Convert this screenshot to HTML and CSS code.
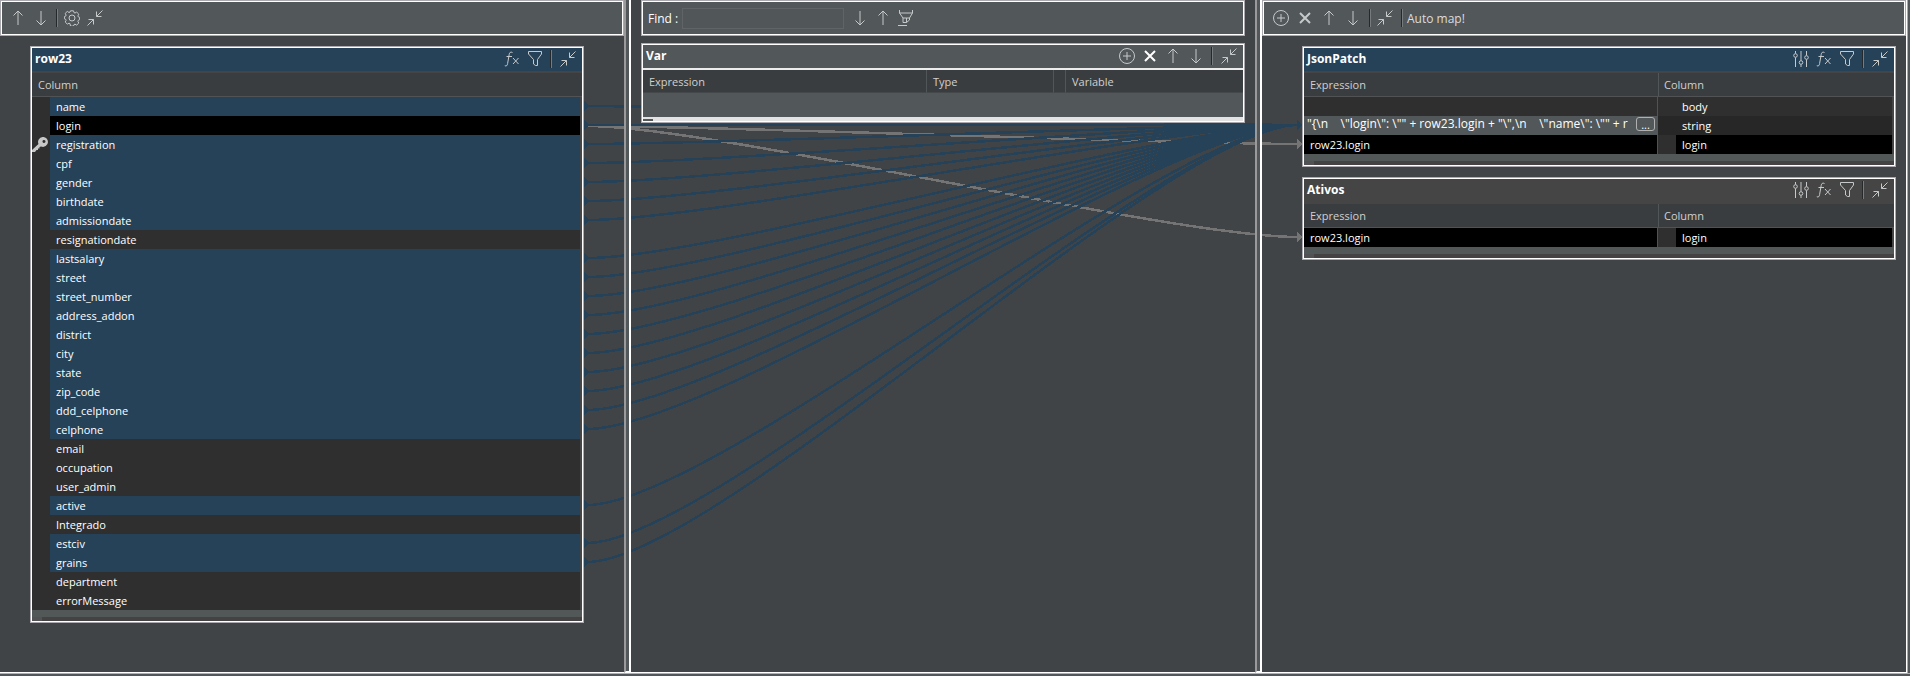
FILE: index.html
```html
<!DOCTYPE html>
<html lang="en">
<head>
<meta charset="utf-8">
<title>Map editor</title>
<link rel="stylesheet" href="styles.css">
</head>
<body>
<svg class="symbols" aria-hidden="true">
  <symbol id="up" viewBox="0 0 16 16"><path d="M8 15V1M3.500 5.500L8 1L12.500 5.500"/></symbol>
  <symbol id="down" viewBox="0 0 16 16"><path d="M8 1V15M3.500 10.500L8 15L12.500 10.500"/></symbol>
  <symbol id="gear" viewBox="0 0 16 16"><circle cx="8" cy="8" r="3"/><path d="M6.500 .8h3l.5 1.800 1 .4 1.700-.9 2.100 2.100-.9 1.700.4 1 1.300.4v2.400l-1.300.6-.4 1 .9 1.700-2.100 2.100-1.700-.9-1 .4-.5 1.500h-3L6 13.600l-1-.4-1.700.9L1.200 12l.9-1.700-.4-1L.4 8.800V6.600l1.300-.5.4-1L1.200 3.400l2.100-2L5 2.500l1-.4z"/></symbol>
  <symbol id="shrink" viewBox="0 0 16 16"><path d="M15.500.5L9.500 6.500M9.500 1.500V6.500H14.500M.5 15.500L6.500 9.500M1.500 9.500H6.500V14.500"/></symbol>
  <symbol id="plus" viewBox="0 0 16 16"><circle cx="8" cy="8" r="7.500"/><path d="M8 4V12M4 8H12"/></symbol>
  <symbol id="cross" viewBox="0 0 16 16"><path class="heavy" d="M3 3L13 13M13 3L3 13"/></symbol>
  <symbol id="fx" viewBox="0 0 16 16"><path d="M8.500 1.500C6.500.5 5.500 1.500 5.200 3.500L3.600 12.500C3.300 14.500 2.500 15.500 .8 14.700M2.500 5.500H8M9 7L14.500 13M14.500 7L9 13"/></symbol>
  <symbol id="funnel" viewBox="0 0 16 16"><path d="M1.500 .5H14.500V3L10.500 8.500V14.500H8.500L6.500 13V8.500L1.500 3Z"/></symbol>
  <symbol id="sliders" viewBox="0 0 16 16"><path d="M2.500 0V2.500M2.500 6.500V16M8 0V9.500M8 13.500V16M13.500 0V4.500M13.500 8.500V16"/><circle cx="2.500" cy="4.500" r="1.800"/><circle cx="8" cy="11.500" r="1.800"/><circle cx="13.500" cy="6.500" r="1.800"/></symbol>
  <symbol id="marker" viewBox="0 0 16 16"><path d="M1.500 0V3L5 8V12.500H8.500L11.500 10V8L14.500 3V0M1.500 3H14.500M5 8H11.500M8.500 8V12.500M0 15.500H9"/></symbol>
  <symbol id="key" viewBox="0 0 16 16"><path class="solid" fill-rule="evenodd" d="M10.500 0A5 5 0 0 1 16 5A5 5 0 0 1 9 9.500L7.500 10V11.500H6V13H4.500L3 15H0V13L6.500 7A5 5 0 0 1 10.500 0ZM11.500 3A1.500 1.500 0 1 0 13.500 4.500A1.500 1.500 0 0 0 11.500 3Z"/></symbol>
</svg>

<main class="mapper" id="mapper">
  <svg class="links" id="links" aria-hidden="true"></svg>

  <section class="pane">
    <div class="toolbar framed">
      <button class="tool" aria-label="Move up"><svg><use href="#up"/></svg></button>
      <button class="tool" aria-label="Move down"><svg><use href="#down"/></svg></button>
      <span class="rule"></span>
      <button class="tool" aria-label="Settings"><svg><use href="#gear"/></svg></button>
      <button class="tool" aria-label="Minimize all"><svg><use href="#shrink"/></svg></button>
    </div>
    <div class="stack stack-in">
      <article class="box framed">
        <header class="title active">
          <h2>row23</h2>
          <button class="tool" aria-label="Expression filter"><svg><use href="#fx"/></svg></button>
          <button class="tool" aria-label="Filter"><svg><use href="#funnel"/></svg></button>
          <span class="rule"></span>
          <button class="tool last" aria-label="Minimize"><svg><use href="#shrink"/></svg></button>
        </header>
        <table class="grid">
          <colgroup><col class="gutter"><col></colgroup>
          <thead><tr><th colspan="2">Column</th></tr></thead>
          <tbody id="source">
            <tr class="used"><td></td><td>name</td></tr>
            <tr class="picked"><td></td><td>login</td></tr>
            <tr class="used"><td><svg class="key"><use href="#key"/></svg></td><td>registration</td></tr>
            <tr class="used"><td></td><td>cpf</td></tr>
            <tr class="used"><td></td><td>gender</td></tr>
            <tr class="used"><td></td><td>birthdate</td></tr>
            <tr class="used"><td></td><td>admissiondate</td></tr>
            <tr><td></td><td>resignationdate</td></tr>
            <tr class="used"><td></td><td>lastsalary</td></tr>
            <tr class="used"><td></td><td>street</td></tr>
            <tr class="used"><td></td><td>street_number</td></tr>
            <tr class="used"><td></td><td>address_addon</td></tr>
            <tr class="used"><td></td><td>district</td></tr>
            <tr class="used"><td></td><td>city</td></tr>
            <tr class="used"><td></td><td>state</td></tr>
            <tr class="used"><td></td><td>zip_code</td></tr>
            <tr class="used"><td></td><td>ddd_celphone</td></tr>
            <tr class="used"><td></td><td>celphone</td></tr>
            <tr><td></td><td>email</td></tr>
            <tr><td></td><td>occupation</td></tr>
            <tr><td></td><td>user_admin</td></tr>
            <tr class="used"><td></td><td>active</td></tr>
            <tr><td></td><td>Integrado</td></tr>
            <tr class="used"><td></td><td>estciv</td></tr>
            <tr class="used"><td></td><td>grains</td></tr>
            <tr><td></td><td>department</td></tr>
            <tr><td></td><td>errorMessage</td></tr>
          </tbody>
        </table>
        <div class="tail"></div>
      </article>
    </div>
  </section>

  <div class="sash"></div>

  <section class="pane pane-var">
    <div class="toolbar framed find">
      <label for="find">Find :</label>
      <input id="find" type="text">
      <button class="tool" aria-label="Next match"><svg><use href="#down"/></svg></button>
      <button class="tool" aria-label="Previous match"><svg><use href="#up"/></svg></button>
      <button class="tool" aria-label="Highlight"><svg><use href="#marker"/></svg></button>
    </div>
    <article class="box framed var">
      <header class="title">
        <h2>Var</h2>
        <button class="tool" aria-label="Add variable"><svg><use href="#plus"/></svg></button>
        <button class="tool bright" aria-label="Remove variable"><svg><use href="#cross"/></svg></button>
        <button class="tool" aria-label="Move up"><svg><use href="#up"/></svg></button>
        <button class="tool" aria-label="Move down"><svg><use href="#down"/></svg></button>
        <span class="rule"></span>
        <button class="tool last" aria-label="Minimize"><svg><use href="#shrink"/></svg></button>
      </header>
      <table class="grid">
        <colgroup><col><col class="w-type"><col class="w-null"><col class="w-var"></colgroup>
        <thead><tr><th>Expression</th><th>Type</th><th></th><th>Variable</th></tr></thead>
      </table>
      <div class="void"></div>
      <div class="scroll"></div>
    </article>
  </section>

  <div class="sash"></div>

  <section class="pane">
    <div class="toolbar framed out">
      <button class="tool" aria-label="Add output"><svg><use href="#plus"/></svg></button>
      <button class="tool" aria-label="Remove output"><svg><use href="#cross"/></svg></button>
      <button class="tool" aria-label="Move up"><svg><use href="#up"/></svg></button>
      <button class="tool" aria-label="Move down"><svg><use href="#down"/></svg></button>
      <span class="rule"></span>
      <button class="tool" aria-label="Minimize all"><svg><use href="#shrink"/></svg></button>
      <span class="rule"></span>
      <button class="textual">Auto map!</button>
    </div>
    <div class="stack stack-out">
      <article class="box framed">
        <header class="title active">
          <h2>JsonPatch</h2>
          <button class="tool" aria-label="Options"><svg><use href="#sliders"/></svg></button>
          <button class="tool" aria-label="Expression filter"><svg><use href="#fx"/></svg></button>
          <button class="tool" aria-label="Filter"><svg><use href="#funnel"/></svg></button>
          <span class="rule"></span>
          <button class="tool last" aria-label="Minimize"><svg><use href="#shrink"/></svg></button>
        </header>
        <table class="grid target">
          <colgroup><col class="w-target"><col class="gutter"><col></colgroup>
          <thead><tr><th>Expression</th><th colspan="2">Column</th></tr></thead>
          <tbody>
            <tr><td></td><td></td><td>body</td></tr>
            <tr class="editing" id="json-string"><td><div class="editor"><input type="text" aria-label="Expression" value="&quot;{\n    \&quot;login\&quot;: \&quot;&quot; + row23.login + &quot;\&quot;,\n    \&quot;name\&quot;: \&quot;&quot; + r"><button aria-label="Open expression editor">...</button></div></td><td></td><td>string</td></tr>
            <tr class="picked" id="json-login"><td>row23.login</td><td></td><td>login</td></tr>
          </tbody>
        </table>
        <div class="tail"></div>
      </article>
      <article class="box framed">
        <header class="title">
          <h2>Ativos</h2>
          <button class="tool" aria-label="Options"><svg><use href="#sliders"/></svg></button>
          <button class="tool" aria-label="Expression filter"><svg><use href="#fx"/></svg></button>
          <button class="tool" aria-label="Filter"><svg><use href="#funnel"/></svg></button>
          <span class="rule"></span>
          <button class="tool last" aria-label="Minimize"><svg><use href="#shrink"/></svg></button>
        </header>
        <table class="grid target">
          <colgroup><col class="w-target"><col class="gutter"><col></colgroup>
          <thead><tr><th>Expression</th><th colspan="2">Column</th></tr></thead>
          <tbody>
            <tr class="picked" id="ativos-login"><td>row23.login</td><td></td><td>login</td></tr>
          </tbody>
        </table>
        <div class="tail"></div>
      </article>
    </div>
  </section>
  <div class="edge"></div>
</main>
<script src="links.js"></script>
</body>
</html>
```

FILE: styles.css
```css
* { box-sizing: border-box; }

body {
  margin: 0;
  min-height: 100vh;
  display: flex;
  flex-direction: column;
  background: #525759;
  color: #fff;
  font: 11px/19px "Open Sans", "Noto Sans", sans-serif;
  overflow: hidden;
}

button, input { font: inherit; color: inherit; }

.symbols { position: absolute; width: 0; height: 0; }

.mapper {
  position: relative;
  flex: 1;
  display: grid;
  grid-template-columns: 624fr 7px 624fr 7px 644fr 4px;
  margin-bottom: 2px;
  border-bottom: 1px solid #b0b0b4;
  box-shadow: inset 0 -1px #fff;
  background: #414446;
}

.links { position: absolute; inset: 0; width: 100%; height: 100%; }
.links path { fill: none; stroke-width: 2.5; shape-rendering: crispEdges; }
.links .soft { stroke: #747474; }
.links .strong { stroke: #264259; }
.links path.end { stroke: none; }
.links path.soft-end { fill: #747474; }
.links path.strong-end { fill: #264259; }

.framed {
  position: relative;
  border: 1px solid #a9a9af;
  outline: 1px solid #fff;
  outline-offset: -2px;
  padding: 1px;
}

.sash {
  position: relative;
  border-left: 2px solid #9a9a9a;
  border-right: 2px solid #fff;
  border-bottom: 2px solid #fff;
  background: #525759;
}

.edge {
  border-left: 1px solid #fff;
  box-shadow: inset 1px 0 #a9a9af;
  background: #525759;
}

/* toolbars */
.toolbar {
  display: flex;
  align-items: center;
  height: 36px;
  padding: 0 5px;
  background: #525759;
}

.tool {
  width: 23px;
  height: 20px;
  padding: 0;
  border: 0;
  background: none;
  flex: none;
  display: grid;
  place-items: center;
}

.tool svg {
  width: 16px;
  height: 16px;
  fill: none;
  stroke: #c6c9ca;
  stroke-width: 1;
}

.bright svg { stroke: #fff; }
.heavy { stroke-width: 2; }
.last { width: 28px; }

.rule {
  flex: none;
  width: 2px;
  height: 18px;
  margin: 0 2px 0 4px;
  border-left: 1px solid #26292b;
  border-right: 1px solid #777b7d;
}

.find { padding-left: 6px; }
.find label { font-size: 12px; }

.find input {
  width: 162px;
  height: 21px;
  margin: 0 4px;
  border: 1px solid #616466;
  background: #515658;
}

.out { padding-left: 6px; }
.out .tool { width: 24px; }

.textual {
  padding: 0 2px;
  border: 0;
  background: none;
  color: #dcdcdc;
  font-size: 12px;
}

/* mapping tables */
.pane-var { padding: 0 10px; }
.stack { display: flex; flex-direction: column; gap: 10px; padding-top: 10px; }
.stack-in { padding-left: 30px; padding-right: 40px; }
.stack-out { padding-left: 40px; padding-right: 10px; }
.box { background: #454545; }

.title {
  display: flex;
  align-items: center;
  height: 25px;
  border-bottom: 2px solid #454545;
  padding: 0 0 2px 3px;
}

.title.active { background: #264259; }

h2 { flex: 1; margin: 0; color: #fff; font-size: 12px; font-weight: 700; }

.grid { width: 100%; table-layout: fixed; border-collapse: separate; border-spacing: 0; }
.gutter { width: 18px; }

.grid th {
  height: 24px;
  padding: 0 6px;
  border-bottom: 1px solid #515253;
  background: #3a3d3f;
  color: #d0d0d0;
  font-weight: 400;
  text-align: left;
}

.grid th + th { border-left: 1px solid #515659; }

.grid td {
  height: 19px;
  padding: 0 6px;
  line-height: 18px;
  background: #2f2f2f;
  white-space: nowrap;
}

.grid td:empty, .grid td:has(.key) { padding: 0; }
.grid td:last-child { border-right: 2px solid #454545; }
.used td:last-child { background: #264259; }
.picked td:last-child { background: #000; }

.target th + th { padding-left: 5px; }
.target td:first-child { border-right: 1px solid #525252; }
.target .picked td:first-child { background: #000; }
.w-target { width: 60%; }

.key { display: block; width: 16px; height: 16px; }
.solid { fill: #c8c8c8; }

.target .editing td { background: #272727; }
.target .editing td:first-child { padding: 0; border-right-color: #525759; background: #525759; }
.editor { display: flex; align-items: flex-start; height: 19px; padding: 0 2px 0 3px; }

.editor input {
  flex: 1;
  min-width: 0;
  height: 16px;
  padding: 0;
  border: 0;
  background: none;
  font-size: 12px;
  white-space: pre;
}

.editor button {
  width: 19px;
  height: 14px;
  margin: 1px 0 0 6px;
  padding: 0;
  border: 1px solid #b0b0b0;
  border-radius: 3px;
  background: none;
  line-height: 14px;
}

.tail {
  height: 11px;
  border-top: 7px solid #525757;
  background: linear-gradient(90deg, #525254 10px, #454243 10px);
}

.var { margin-top: 7px; background: #525759; }
.var .title { border-bottom-color: #ececec; }
.var .grid th { height: 23px; border-bottom-color: #45484a; }
.w-type { width: 127px; }
.w-null { width: 12px; }
.w-var { width: 178px; }
.void { height: 24px; }

.scroll {
  height: 4px;
  border-top: 2px solid #e2e2e2;
  background: linear-gradient(90deg, #525759 10px, #e2e2e2 10px);
}
```

FILE: links.js
```js
(function () {
  var root = document.getElementById('mapper');
  var svg = document.getElementById('links');
  var NS = 'http://www.w3.org/2000/svg';

  function add(d, name) {
    var p = document.createElementNS(NS, 'path');
    p.setAttribute('d', d);
    p.setAttribute('class', name);
    svg.appendChild(p);
  }

  function middle(row) {
    var r = row.getBoundingClientRect();
    return Math.round(r.top - root.getBoundingClientRect().top) + 9;
  }

  function curve(x1, y1, x2, y2, name) {
    var bend = (x2 - x1) * 0.18;
    add('M' + x1 + ' ' + y1 + 'C' + (x1 + bend) + ' ' + y1 + ' ' + (x2 - bend) + ' ' + y2 + ' ' + x2 + ' ' + y2, name);
  }

  function arrow(x, y, name) {
    add('M' + x + ' ' + (y - 5) + 'l5 5l-5 5z', 'end ' + name);
  }

  function draw() {
    svg.textContent = '';
    var x1 = Math.round(document.getElementById('source').closest('article').getBoundingClientRect().right);
    var goal = document.getElementById('json-string');
    var x2 = Math.round(goal.closest('article').getBoundingClientRect().left);
    var login = middle(document.querySelector('#source .picked'));

    ['json-login', 'ativos-login'].forEach(function (id) {
      var y = middle(document.getElementById(id));
      curve(x1 + 3, login + 1, x2 - 4, y, 'soft');
      arrow(x2 - 5, y, 'soft-end');
    });

    var yGoal = middle(goal);
    document.querySelectorAll('#source .used, #source .picked').forEach(function (row) {
      var y = middle(row);
      curve(x1 + 3, y, x2 - 4, yGoal, 'strong');
      arrow(x1, y, 'strong-end');
    });
    arrow(x2 - 5, yGoal, 'strong-end');
  }

  draw();
  window.addEventListener('resize', draw);
})();
```
